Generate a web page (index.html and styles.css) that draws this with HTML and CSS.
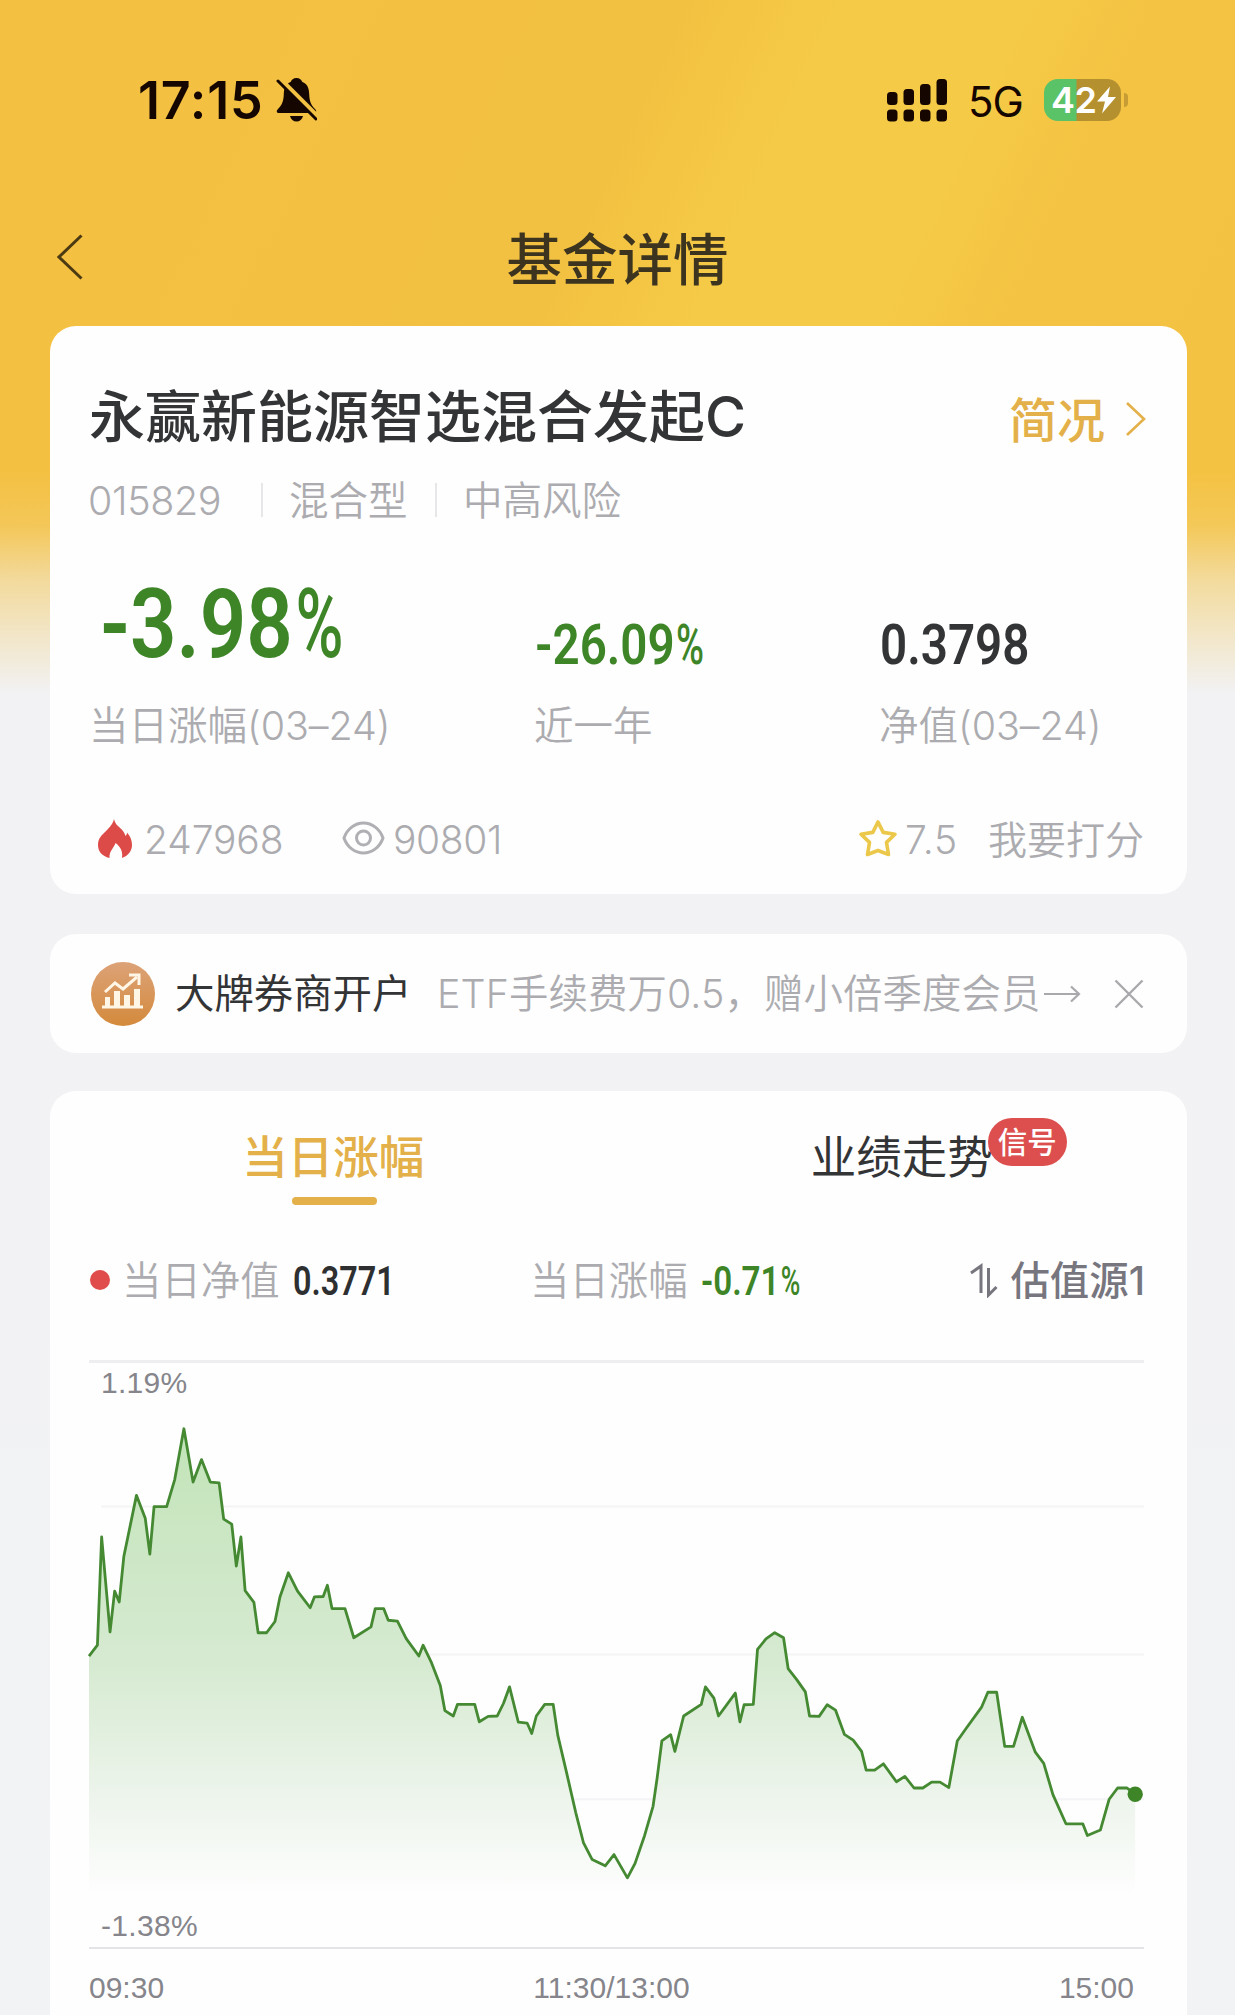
FILE: index.html
```html
<!DOCTYPE html>
<html lang="zh-CN">
<head>
<meta charset="utf-8">
<title>基金详情</title>
<link rel="stylesheet" href="styles.css">
</head>
<body>
<div class="screen">
  <header class="status">
    <div class="status-left">
      <span class="clock">17:15</span>
      <svg class="bell" viewBox="0 0 41 44" width="41" height="44">
        <path d="M20.5 0c-3.200 0-5 1.800-5.600 3.700C9.500 5.800 8 10.500 7.800 16 7.500 24 6 26.500 2 31c-2 2.300-1.500 4 1 4h35c2.500 0 3-1.700 1-4-4-4.500-5.500-7-5.800-15-.2-5.500-1.700-10.200-7.100-12.300C25.500 1.800 23.700 0 20.500 0z"/>
        <path d="M14 38h13c-.8 3.500-3.300 5.500-6.500 5.500S14.800 41.500 14 38z"/>
        <path d="M4.500 1.500L41 38" stroke="#f4c243" stroke-width="5"/>
        <path d="M2 3l38 38" stroke="#150600" stroke-width="3" stroke-linecap="round"/>
      </svg>
    </div>
    <div class="status-right">
      <svg class="signal" viewBox="0 0 60 43" width="60" height="43">
        <rect x="0" y="13" width="10.500" height="13" rx="3.500"/><rect x="16.500" y="10" width="10.500" height="16" rx="3.500"/><rect x="33" y="5" width="10.500" height="21" rx="3.500"/><rect x="49.500" y="0" width="10.500" height="26" rx="3.500"/>
        <rect x="0" y="30.500" width="10.500" height="12" rx="3.500"/><rect x="16.500" y="30.500" width="10.500" height="12" rx="3.500"/><rect x="33" y="30.500" width="10.500" height="12" rx="3.500"/><rect x="49.500" y="30.500" width="10.500" height="12" rx="3.500"/>
      </svg>
      <span class="net">5G</span>
      <div class="battery">
        <span class="battery-num">42</span>
        <svg viewBox="0 0 19 27" width="19" height="28"><path d="M13 0L0 15h8L5 27 19 10.500h-8z" fill="#fff"/></svg>
      </div>
      <i class="battery-cap"></i>
    </div>
  </header>

  <nav class="nav">
    <svg class="back" viewBox="0 0 26 46" width="26" height="46"><path d="M24.500 1.500L2 23l22.500 21.500" fill="none" stroke="#4c3a12" stroke-width="3"/></svg>
    <h1>基金详情</h1>
  </nav>

  <main>
    <section class="card fund">
      <div class="fund-head">
        <h2>永赢新能源智选混合发起C</h2>
        <a class="brief"><span>简况</span><svg viewBox="0 0 22 36" width="22" height="36"><path d="M2 2l17 16L2 34" fill="none" stroke="#e3b04a" stroke-width="2.600"/></svg></a>
      </div>
      <div class="meta"><span class="code">015829</span><span class="kind">混合型</span><span class="risk">中高风险</span></div>
      <div class="stats">
        <div class="stat"><div class="num big green"><span>-3.98<i class="pct">%</i></span></div><div class="label">当日涨幅<em>(03–24)</em></div></div>
        <div class="stat"><div class="num green"><span>-26.09<i class="pct">%</i></span></div><div class="label">近一年</div></div>
        <div class="stat"><div class="num"><span>0.3798</span></div><div class="label">净值<em>(03–24)</em></div></div>
      </div>
      <div class="social">
        <svg class="fire" viewBox="0 0 34 39" width="34" height="39"><path d="M16 0c1 6 6 8 9 12 1.500 2 2 3.500 2.500 5 1-1 1.500-2 1.500-3.500 3.500 4 5 8 5 12.500 0 6-4 11-10 13 1-6-1-11-6.500-15-1 4-6.500 8-6 15C4 37 0 32.500 0 26c0-7 4-10 8-14 3.500-3.500 7-7 8-12z" fill="#dd4b48"/></svg>
        <span class="heat">247968</span>
        <svg class="eye" viewBox="0 0 43 34" width="43" height="34" fill="none" stroke="#b0b0b4" stroke-width="3"><path d="M2 17C5 8 13 2 21.500 2S38 8 41 17c-3 9-11 15-19.500 15S5 26 2 17z"/><circle cx="21.500" cy="17" r="7"/></svg>
        <span class="views">90801</span>
        <svg class="star" viewBox="0 0 40 38" width="40" height="38"><path d="M20 3l5.200 10.400 11.800 1.800-8.500 8.200 2 12.100L20 31.500 9.500 35.500l2-12.100L3 15.200l11.800-1.800z" fill="none" stroke="#ecc84a" stroke-width="3.600" stroke-linejoin="round"/></svg>
        <span class="score">7.5</span>
        <span class="rate">我要打分</span>
      </div>
    </section>

    <section class="card promo">
      <svg class="promo-icon" viewBox="0 0 64 64" width="64" height="64">
        <defs><linearGradient id="copper" x1="0" y1="0" x2="0" y2="1"><stop offset="0" stop-color="#dca277"/><stop offset="1" stop-color="#d48a3c"/></linearGradient></defs>
        <circle cx="32" cy="32" r="32" fill="url(#copper)"/>
        <g fill="none" stroke="#fff6e6" stroke-width="3"><path d="M14 30l10-9 8 6 14-12"/><path d="M38 13h10v10"/><path d="M11 45h41"/></g>
        <path d="M14 35h5v10h-5zM23 29h6v16h-6zM33 33h6v12h-6zM43 27h6v18h-6z" fill="#fff6e6"/>
      </svg>
      <strong>大牌券商开户</strong>
      <span class="promo-text">ETF手续费万0.5，赠小倍季度会员</span>
      <svg class="arrow" viewBox="0 0 37 18" width="37" height="18"><path d="M0 9h35M27 1.500L35 9l-8 7.500" fill="none" stroke="#a9a9ad" stroke-width="2.200"/></svg>
      <svg class="close" viewBox="0 0 30 30" width="30" height="30"><path d="M1.500 1.500l27 27M28.500 1.500l-27 27" stroke="#a9a9ad" stroke-width="2.400"/></svg>
    </section>

    <section class="card trend">
      <div class="tabs">
        <div class="tab active"><span>当日涨幅</span></div>
        <div class="tab"><span>业绩走势<i class="badge">信号</i></span></div>
      </div>
      <div class="info">
        <div class="info-item"><i class="dot"></i><span>当日净值</span><b class="din">0.3771</b></div>
        <div class="info-item"><span>当日涨幅</span><b class="din green">-0.71<i class="pct">%</i></b></div>
        <div class="info-item source"><svg viewBox="0 0 28 36" width="28" height="36" fill="none" stroke="#77767f" stroke-width="3"><path d="M1 11l10-7v27"/><path d="M18.500 6v27l8-8"/></svg><span>估值源1</span></div>
      </div>
      <div class="chart">
        <svg class="plot" viewBox="128 5 2757 1403" preserveAspectRatio="none">
          <defs><linearGradient id="fade" gradientUnits="userSpaceOnUse" x1="0" y1="160" x2="0" y2="1290"><stop offset="0" stop-color="#c2e4b8"/><stop offset=".5" stop-color="#d6ead1"/><stop offset=".8" stop-color="#eef5ed"/><stop offset="1" stop-color="#fefefe"/></linearGradient></defs>
          <g class="grid"><path d="M160 350H2885M128 705H2885M128 1053H2885"/></g>
          <path id="area" fill="url(#fade)" d="M128 709L150 683 161 423 183 651 195 553 207 579 219 470 252 323 275 378 287 464 298 350 331 350 352 285 376 163 400 291 422 237 445 291 468 293 480 380 501 392 513 493 525 423 536 552 559 580 570 653 592 653 614 626 627 567 649 509 673 553 706 593 717 567 740 566 751 539 763 595 797 595 820 665 865 639 876 595 898 595 910 623 934 625 957 667 990 709 1001 683 1022 723 1046 780 1058 840 1080 853 1091 825 1136 825 1148 867 1171 854 1195 853 1211 823 1227 783 1250 868 1273 870 1285 895 1297 853 1319 825 1341 825 1353 899 1375 985 1400 1085 1420 1157 1443 1198 1477 1213 1500 1186 1535 1242 1555 1207 1580 1140 1602 1070 1613 1000 1625 913 1648 898 1659 938 1682 853 1728 825 1739 783 1761 810 1773 853 1817 798 1829 867 1840 826 1864 825 1875 693 1897 668 1920 653 1943 665 1955 739 1977 765 2000 795 2011 853 2036 854 2057 826 2079 839 2102 897 2125 911 2147 938 2159 983 2181 983 2204 968 2238 1011 2260 998 2284 1026 2307 1026 2330 1012 2352 1012 2375 1025 2397 913 2420 883 2461 831 2477 796 2500 796 2521 926 2544 926 2567 856 2601 940 2623 967 2647 1042 2681 1112 2725 1112 2737 1140 2771 1127 2794 1053 2816 1026 2862 1028V1300H128Z"/>
          <polyline class="line" points="128,709 150,683 161,423 183,651 195,553 207,579 219,470 252,323 275,378 287,464 298,350 331,350 352,285 376,163 400,291 422,237 445,291 468,293 480,380 501,392 513,493 525,423 536,552 559,580 570,653 592,653 614,626 627,567 649,509 673,553 706,593 717,567 740,566 751,539 763,595 797,595 820,665 865,639 876,595 898,595 910,623 934,625 957,667 990,709 1001,683 1022,723 1046,780 1058,840 1080,853 1091,825 1136,825 1148,867 1171,854 1195,853 1211,823 1227,783 1250,868 1273,870 1285,895 1297,853 1319,825 1341,825 1353,899 1375,985 1400,1085 1420,1157 1443,1198 1477,1213 1500,1186 1535,1242 1555,1207 1580,1140 1602,1070 1613,1000 1625,913 1648,898 1659,938 1682,853 1728,825 1739,783 1761,810 1773,853 1817,798 1829,867 1840,826 1864,825 1875,693 1897,668 1920,653 1943,665 1955,739 1977,765 2000,795 2011,853 2036,854 2057,826 2079,839 2102,897 2125,911 2147,938 2159,983 2181,983 2204,968 2238,1011 2260,998 2284,1026 2307,1026 2330,1012 2352,1012 2375,1025 2397,913 2420,883 2461,831 2477,796 2500,796 2521,926 2544,926 2567,856 2601,940 2623,967 2647,1042 2681,1112 2725,1112 2737,1140 2771,1127 2794,1053 2816,1026 2840,1026 2862,1041"/>
          <ellipse cx="2862" cy="1041" rx="20" ry="18.500" fill="#3d8527"/>
        </svg>
        <span class="ymax">1.19%</span>
        <span class="ymin">-1.38%</span>
      </div>
      <div class="times"><span>09:30</span><span>11:30/13:00</span><span>15:00</span></div>
    </section>
  </main>
</div>
</body>
</html>
```
FILE: styles.css
```css
* { box-sizing: border-box; margin: 0; padding: 0; }
html, body { height: 2015px; overflow: hidden; }
body { font-family: Inter, "Noto Sans CJK SC", sans-serif; color: #333436; font-weight: 350; }
i, em { font-style: normal; }
svg { display: block; flex: none; }

.screen {
  height: 2015px;
  overflow: hidden;
  background:
    linear-gradient(180deg, rgba(242,243,246,0) 470px, rgba(242,243,246,.12) 525px, rgba(242,243,246,.5) 580px, rgba(242,243,246,.72) 630px, #f2f2f5 695px, #f2f3f5 100%),
    linear-gradient(115deg, #f4c042 0, #f3c141 44%, #f5ca46 54%, #f5ca46 66%, #f4c343 74%, #f4c242 100%) 0 0 / 100% 700px no-repeat;
}

/* status bar */
.status { height: 200px; display: flex; justify-content: space-between; padding: 0 107px 0 138px; color: #150600; }
.status-left, .status-right { display: flex; align-items: center; }
.clock { font: 600 52px/60px Inter, sans-serif; letter-spacing: .8px; width: 138px; padding-top: 2px; }
.bell, .signal { fill: #150600; }
.net { font: 400 42px/50px Inter, sans-serif; width: 76px; margin-left: 21px; padding-top: 4px; letter-spacing: -1px; }
.battery {
  width: 77px; height: 42px; border-radius: 14px; padding-left: 7px;
  display: flex; align-items: center;
  background: linear-gradient(90deg, #5ac267 32px, #b5902f 33px);
}
.battery-num { font: 600 36px/42px Inter, sans-serif; color: #fff; width: 46px; letter-spacing: -.5px; }
.battery-cap { width: 4px; height: 14px; margin-left: 3px; border-radius: 0 4px 4px 0; background: #c89c35; }

/* title bar */
.nav { height: 126px; padding: 0 57px 12px; display: grid; grid-template-columns: 26px 1fr 26px; align-items: center; }
.nav h1 { font-size: 55.500px; line-height: 80px; font-weight: 500; text-align: center; color: #3d3420; padding-top: 5px; }

.card { margin: 0 48px 0 50px; background: #fefefe; border-radius: 26px; }

/* fund summary */
.fund { height: 568px; padding: 46px 40px 0; }
.fund-head { display: flex; justify-content: space-between; height: 86px; align-items: center; }
.fund-head h2 { font-size: 56px; line-height: 84px; font-weight: 500; padding-top: 4px; margin-left: -1px; }
.brief { display: flex; align-items: center; gap: 20px; padding-top: 8px; font-size: 48px; line-height: 72px; font-weight: 500; color: #e3b04a; }
.brief span { padding-top: 4px; }
.meta { display: flex; align-items: center; height: 80px; font-size: 39.500px; color: #acacb0; }
.meta span { line-height: 60px; padding-top: 6px; }
.meta .code { width: 173px; margin-left: -2px; letter-spacing: -.4px; }
.meta .kind, .meta .risk { position: relative; padding-left: 28px; }
.meta .kind { width: 174px; }
.kind::before, .risk::before { content: ""; position: absolute; left: 0; top: 18px; width: 2px; height: 34px; background: #e7e7ea; }
.stats { display: grid; grid-template-columns: 445px 345px 1fr; color: #333436; }
.num { height: 158px; display: flex; align-items: flex-end; font: 600 56px/66px Roboto, sans-serif; padding-bottom: 18px; }
.num span { display: block; transform: scaleX(.85); transform-origin: left; }
.num.big { font-size: 96px; line-height: 112px; padding: 0 0 16px 10px; }
.pct { display: inline-block; font-weight: 500; transform: scaleX(.8); transform-origin: left; margin-left: .03em; }
.green { color: #3d8527; }
.label { font-size: 39.500px; line-height: 54px; color: #acacb0; padding-top: 3px; margin-left: -1px; }
.label em { letter-spacing: -.1px; }
.social { margin-top: 55px; height: 60px; display: flex; align-items: center; font-size: 39px; line-height: 60px; color: #acacb0; padding-left: 8px; }
.social span { padding-top: 3px; }
.heat { width: 198px; margin-left: 12px; letter-spacing: -.1px; }
.eye { margin-right: 8px; }
.views { letter-spacing: -.4px; }
.star { margin-left: auto; }
.score { width: 83px; margin-left: 7px; letter-spacing: .8px; }
.rate { margin-right: 3px; }

/* promotion */
.promo { margin-top: 40px; height: 119px; padding: 0 43px 0 41px; display: flex; align-items: center; font-size: 39.400px; line-height: 60px; }
.promo strong { font-weight: 400; margin: 0 0 0 20px; width: 262px; }
.promo-text { color: #acacb0; white-space: nowrap; letter-spacing: .1px; }
.arrow { margin-left: 4px; }
.close { margin-left: auto; }

/* daily trend */
.trend { margin-top: 38px; height: 1000px; }
.tabs { display: grid; grid-template-columns: 1fr 1fr; padding-top: 34px; height: 114px; }
.tab { display: flex; flex-direction: column; align-items: center; font-size: 45.500px; line-height: 58px; font-weight: 400; }
.tab span { position: relative; top: 4px; left: -1px; }
.tab.active { color: #e3b04a; font-weight: 500; }
.tab.active::after { content: ""; width: 85px; height: 8px; border-radius: 4px; margin-top: 14px; background: #e3b04a; }
.badge {
  position: absolute; left: 177px; top: -11px; width: 79px; height: 48px; border-radius: 24px;
  background: #dc4f4e; color: #fff; font-size: 29.500px; line-height: 49px; font-weight: 500; text-align: center;
}
.info { margin-top: 42px; padding: 0 43px 0 40px; height: 60px; display: grid; grid-template-columns: 440px 1fr auto; font-size: 39.400px; line-height: 56px; color: #acacb0; }
.info-item { display: flex; align-items: center; }
.info-item span { padding-top: 3px; }
.dot { width: 20px; height: 20px; border-radius: 50%; background: #e04c4b; margin-right: 12px; }
.din { font: 600 40px/60px Roboto, sans-serif; color: #2e2f31; margin-left: 13px; padding-top: 5px; transform: scaleX(.81); transform-origin: left; }
.din.green { color: #3d8527; transform: scaleX(.83); }
.source { color: #77767f; font-weight: 500; gap: 12px; margin-right: -1px; }
.chart { position: relative; margin: 53px 43px 0 39px; height: 589px; border-top: 3px solid #eeeef0; border-bottom: 2px solid #e4e4e6; }
.plot { width: 100%; height: 100%; overflow: visible; }
.grid path { fill: none; stroke: #f4f4f6; stroke-width: 2; vector-effect: non-scaling-stroke; }
.line { fill: none; stroke: #458a33; stroke-width: 2.800; stroke-linejoin: round; vector-effect: non-scaling-stroke; }
.ymax, .ymin, .times { font: 400 30px/34px "Liberation Sans", sans-serif; color: #85858b; }
.ymax { position: absolute; left: 12px; top: 3px; letter-spacing: .3px; }
.ymin { position: absolute; left: 12px; bottom: 4px; letter-spacing: .3px; }
.times { display: flex; justify-content: space-between; margin: 22px 53px 0 39px; }
```
